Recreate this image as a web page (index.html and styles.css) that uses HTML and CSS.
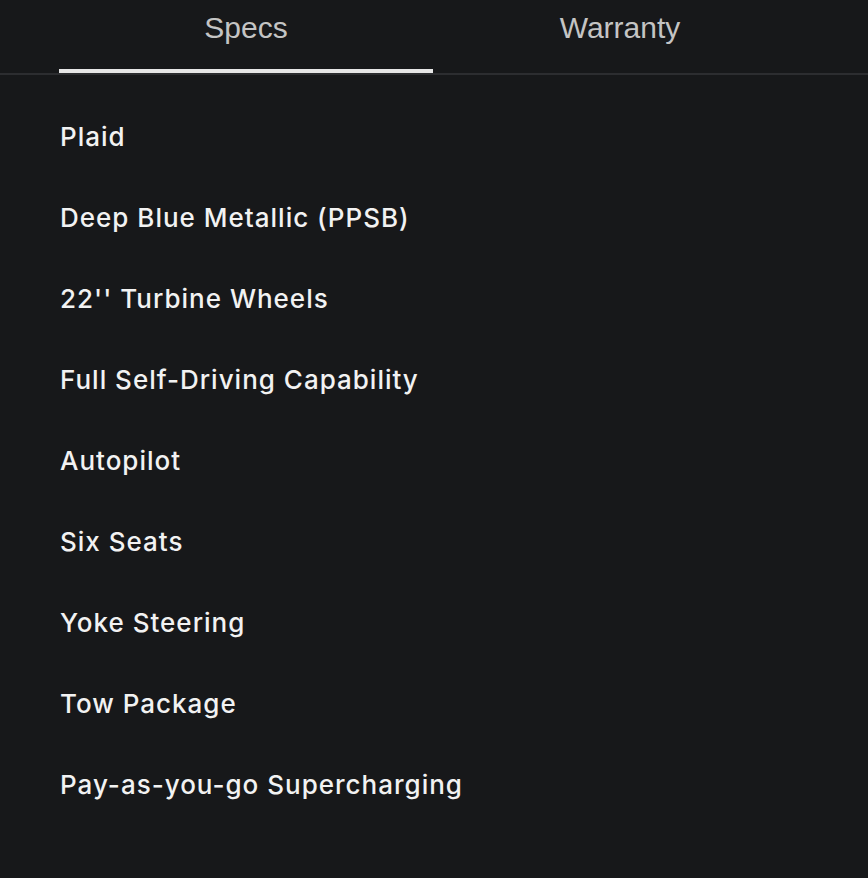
FILE: index.html
```html
<!DOCTYPE html>
<html>
<head>
<meta charset="utf-8">
<link rel="stylesheet" href="styles.css">
</head>
<body>
<div class="tabs">
  <div class="tab active">Specs</div>
  <div class="tab">Warranty</div>
</div>
<ul class="specs">
  <li>Plaid</li>
  <li>Deep Blue Metallic (PPSB)</li>
  <li>22'' Turbine Wheels</li>
  <li>Full Self-Driving Capability</li>
  <li>Autopilot</li>
  <li>Six Seats</li>
  <li>Yoke Steering</li>
  <li>Tow Package</li>
  <li>Pay-as-you-go Supercharging</li>
</ul>
</body>
</html>
```
FILE: styles.css
```css
html, body {
  margin: 0;
  padding: 0;
  background: #17181a;
  height: 100%;
}
body {
  font-family: Inter, "DejaVu Sans", sans-serif;
  color: #f2f2f2;
}
.tabs {
  display: flex;
  padding-left: 59px;
  border-bottom: 2px solid #2c2d30;
}
.tab {
  width: 374px;
  height: 73px;
  box-sizing: border-box;
  padding-top: 11px;
  text-align: center;
  font-family: "Liberation Sans", Arial, sans-serif;
  font-size: 30px;
  color: #c4c4c4;
  position: relative;
}
.tab.active::after {
  content: "";
  position: absolute;
  left: 0;
  right: 0;
  bottom: 0;
  height: 4px;
  background: #e6e6e6;
}
.specs {
  list-style: none;
  margin: 0;
  padding: 47px 0 0 60px;
}
.specs li {
  font-size: 26px;
  font-weight: 500;
  letter-spacing: 1px;
  line-height: 30px;
  height: 81px;
}
```
